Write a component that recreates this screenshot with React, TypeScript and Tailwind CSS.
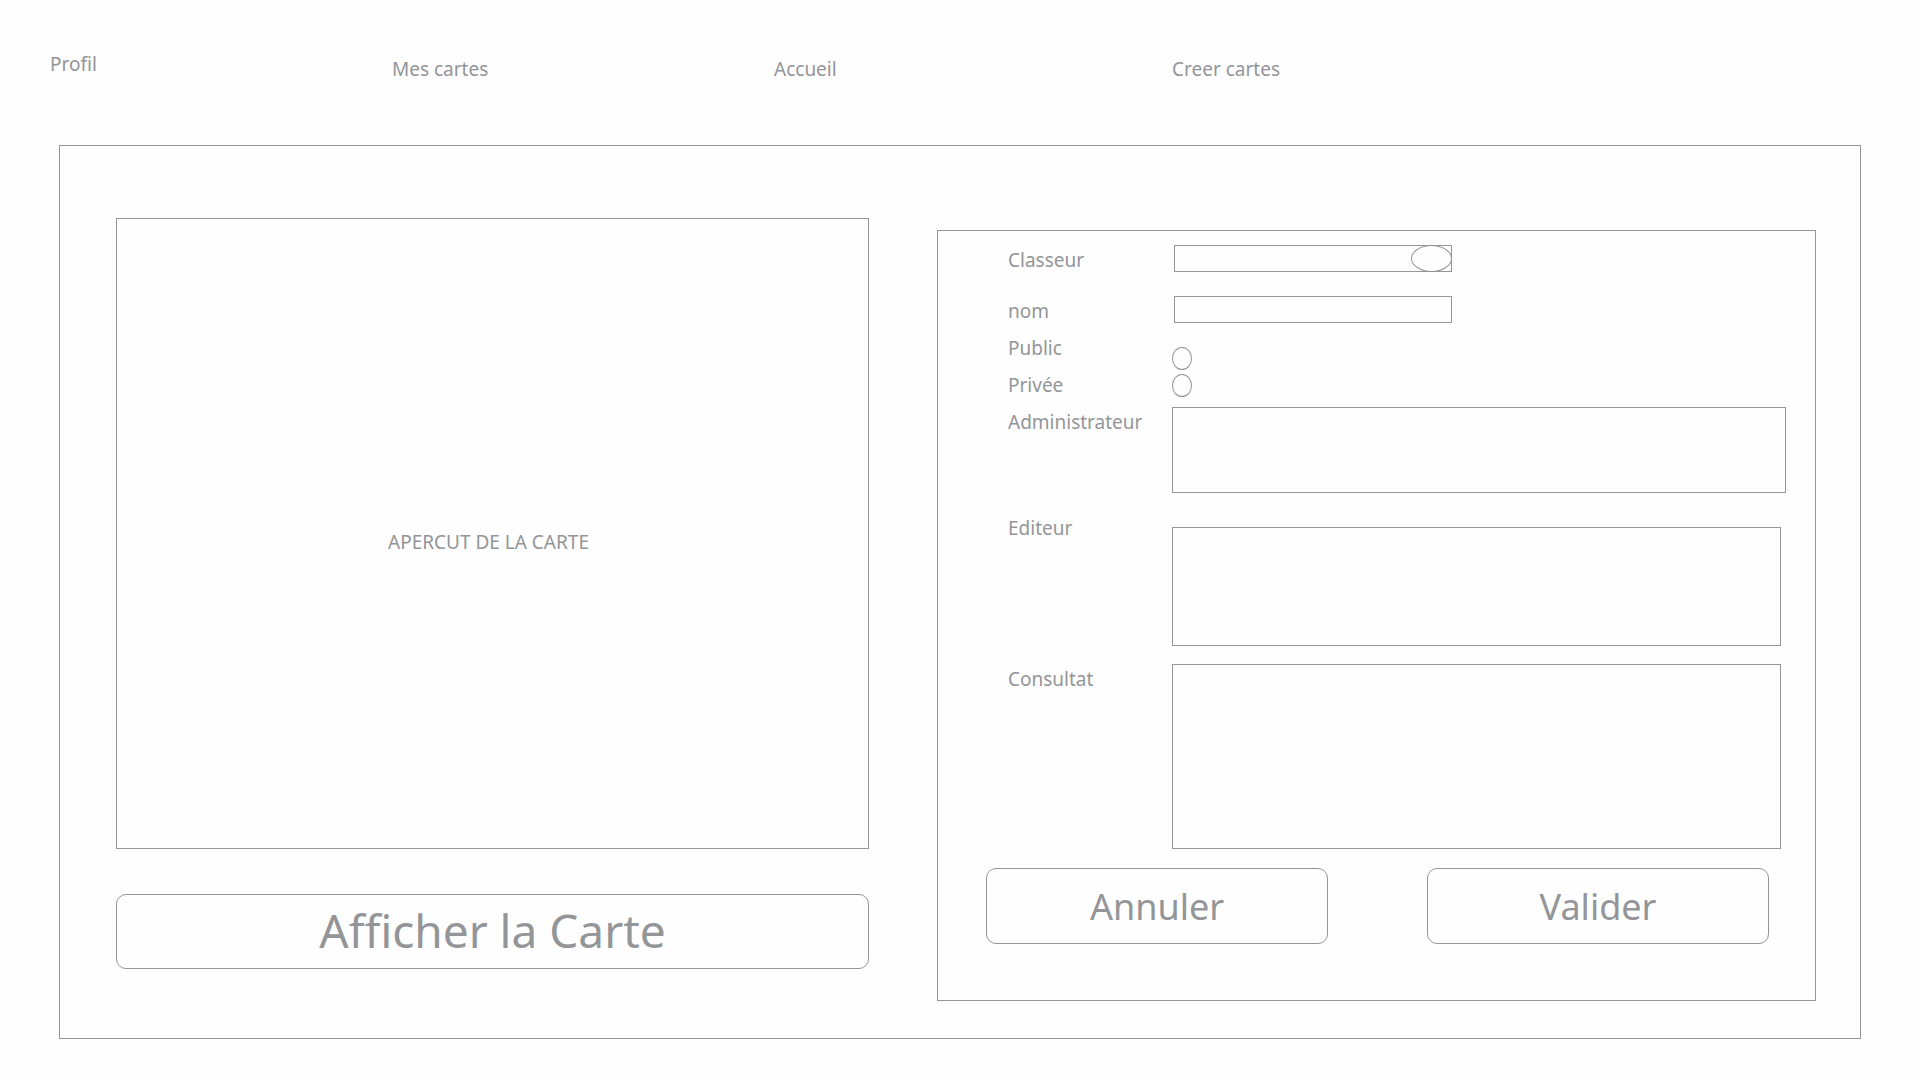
import type { ReactNode } from "react";

const line = "border border-[#939598]";

const links = ["Mes cartes", "Accueil", "Creer cartes"];

function Row({ id, label, className, children }: { id: string; label: string; className: string; children: ReactNode }) {
  return (
    <div className={`flex items-start ${className}`}>
      <label htmlFor={id} className="w-[164px] shrink-0">
        {label}
      </label>
      {children}
    </div>
  );
}

function Preview() {
  return (
    <section className="flex min-w-0 flex-col pt-[72px] pb-[69px]">
      <div className={`flex flex-1 items-center justify-center pt-4 pr-2 ${line}`}>
        <p>APERCUT DE LA CARTE</p>
      </div>
      <button type="button" className={`mt-[45px] h-[75px] rounded-[10px] pb-1 text-[46px] ${line}`}>
        Afficher la Carte
      </button>
    </section>
  );
}

function CardForm() {
  const radio = `h-[23px] w-5 shrink-0 appearance-none rounded-[50%] checked:bg-[#939598] ${line}`;
  return (
    <form className={`mt-[84px] min-w-0 pt-3.5 pb-14 ${line}`} onSubmit={(e) => e.preventDefault()}>
      <div className="pl-[70px]">
        <Row id="classeur" label="Classeur" className="">
          <div className="relative ml-0.5 h-[27px] w-[278px]">
            <select id="classeur" className={`block h-full w-full appearance-none bg-transparent px-2 ${line}`} />
            <span className={`pointer-events-none absolute top-0 right-0 h-full w-[41px] rounded-[50%] ${line}`} />
          </div>
        </Row>
        <Row id="nom" label="nom" className="mt-[21px]">
          <input id="nom" type="text" className={`ml-0.5 h-[27px] w-[278px] px-2 ${line}`} />
        </Row>
        <Row id="public" label="Public" className="mt-[7px]">
          <input id="public" type="radio" name="visibilite" className={`mt-3.5 ${radio}`} />
        </Row>
        <Row id="privee" label="Privée" className="">
          <input id="privee" type="radio" name="visibilite" className={`mt-1 ${radio}`} />
        </Row>
        <Row id="administrateur" label="Administrateur" className="mt-[7px] pr-[29px]">
          <textarea id="administrateur" className={`h-[86px] min-w-0 flex-1 resize-none px-2 ${line}`} />
        </Row>
        <Row id="editeur" label="Editeur" className="mt-5 pr-[34px]">
          <textarea id="editeur" className={`mt-3.5 h-[119px] min-w-0 flex-1 resize-none px-2 ${line}`} />
        </Row>
        <Row id="consultat" label="Consultat" className="mt-[18px] pr-[34px]">
          <textarea id="consultat" className={`h-[185px] min-w-0 flex-1 resize-none px-2 ${line}`} />
        </Row>
      </div>
      <div className="mt-[19px] flex gap-[99px] pr-[46px] pl-12 text-4xl">
        <button type="button" className={`h-[76px] flex-1 rounded-[10px] pt-0.5 ${line}`}>
          Annuler
        </button>
        <button type="submit" className={`h-[76px] flex-1 rounded-[10px] pt-0.5 ${line}`}>
          Valider
        </button>
      </div>
    </form>
  );
}

export default function App() {
  return (
    <div className="min-h-screen bg-[#fefefe] pb-10 font-['Noto_Sans','Open_Sans',sans-serif] text-[19px] leading-[30px] text-[#939598]">
      <nav className="grid h-[145px] grid-cols-[342fr_382fr_398fr_748fr] items-start pt-[49px] pl-[50px]">
        <a href="#profil" className="justify-self-start">
          Profil
        </a>
        {links.map((label) => (
          <a key={label} href="#" className="mt-[5px] justify-self-start">
            {label}
          </a>
        ))}
      </nav>
      <main className={`mx-[59px] grid grid-cols-[753fr_879fr] gap-[68px] pr-11 pl-14 ${line}`}>
        <Preview />
        <div className="min-w-0 pb-[37px]">
          <CardForm />
        </div>
      </main>
    </div>
  );
}
